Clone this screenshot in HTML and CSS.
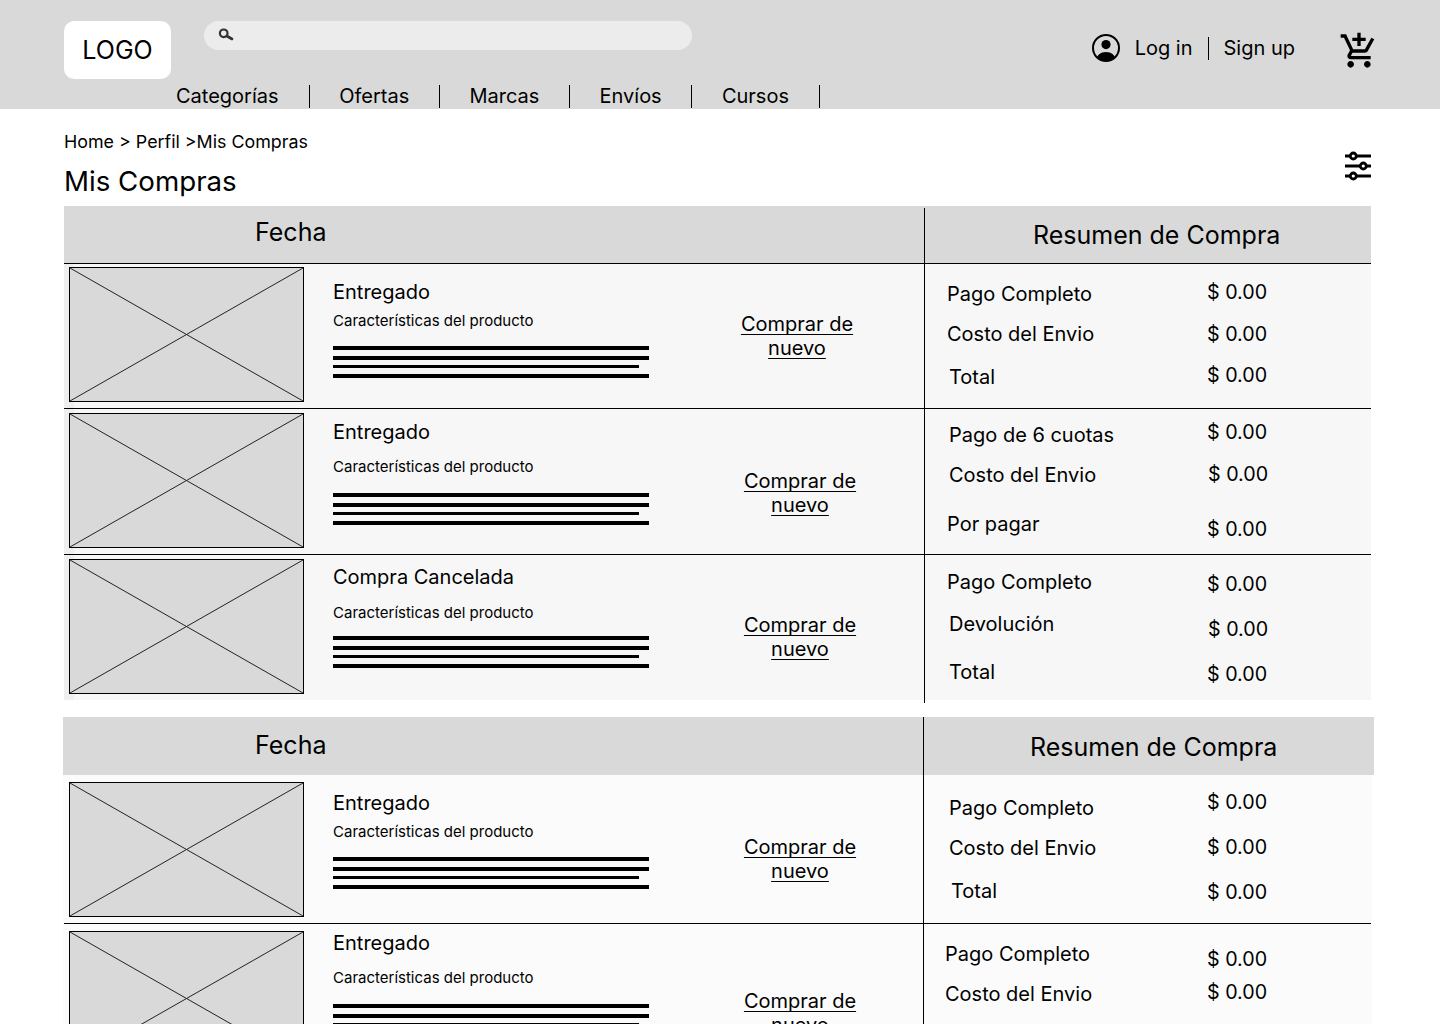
FILE: index.html
```html
<!DOCTYPE html>
<html lang="es">
<head>
<meta charset="utf-8">
<title>Mis Compras</title>
<link rel="stylesheet" href="styles.css">
</head>
<body>
<svg class="defs" width="0" height="0" aria-hidden="true">
  <symbol id="ph" viewBox="0 0 233 133" preserveAspectRatio="none">
    <path d="M0 0L233 133M233 0L0 133" fill="none" stroke="#222" stroke-width="1"/>
  </symbol>
</svg>
<header class="topbar">
  <div class="topbar-row">
    <div class="logo">LOGO</div>
    <div class="search">
      <svg class="search-icon" viewBox="0 0 16 14"><circle cx="5.700" cy="6.300" r="3.800" fill="none" stroke="#333" stroke-width="2.200"/><path d="M8.800 9L14 12" stroke="#333" stroke-width="2.600" stroke-linecap="round"/></svg>
    </div>
    <div class="account">
      <svg class="user-icon" viewBox="0 0 28 28"><defs><clipPath id="uc"><circle cx="14" cy="14" r="13"/></clipPath></defs><circle cx="14" cy="10.600" r="4.600" fill="#000"/><path d="M4 28c0-7 4.500-10 10-10s10 3 10 10z" fill="#000" clip-path="url(#uc)"/><circle cx="14" cy="14" r="13" fill="none" stroke="#000" stroke-width="2"/></svg>
      <a class="login">Log in</a>
      <a class="signup">Sign up</a>
      <svg class="cart-icon" viewBox="0 0 24 24"><path d="M11 9h2V6h3V4h-3V1h-2v3H8v2h3v3zm-4 9c-1.100 0-1.990.9-1.990 2S5.900 22 7 22s2-.9 2-2-.9-2-2-2zm10 0c-1.100 0-1.990.9-1.990 2s.89 2 1.990 2 2-.9 2-2-.9-2-2-2zm-9.830-3.250l.03-.12.9-1.630h7.450c.75 0 1.410-.41 1.750-1.030l3.860-7.010L19.420 4h-.01l-1.100 2-2.760 5H8.530l-.13-.27L6.160 6l-.95-2-.94-2H1v2h2l3.600 7.590-1.350 2.450c-.16.28-.25.61-.25.96 0 1.100.9 2 2 2h12v-2H7.420c-.13 0-.25-.11-.25-.25z" fill="#000"/></svg>
    </div>
  </div>
  <nav class="nav">
    <a>Categorías</a><a>Ofertas</a><a>Marcas</a><a>Envíos</a><a>Cursos</a>
  </nav>
</header>

<main class="page">
  <div class="page-head">
    <div>
      <p class="crumbs">Home &gt; Perfil &gt;Mis Compras</p>
      <h1 class="title">Mis Compras</h1>
    </div>
    <svg class="filter-icon" viewBox="0 0 26 30"><g stroke="#000" stroke-width="2.800" fill="#fff"><path d="M0 5H26M0 15H26M0 25H26"/><circle cx="8.300" cy="5" r="3"/><circle cx="18.300" cy="15" r="3"/><circle cx="8.300" cy="25" r="3"/></g></svg>
  </div>

  <section class="orders orders-a">
    <div class="orders-head head-a">
      <h2 class="head-date">Fecha</h2>
      <h2 class="head-sum head-sum-a">Resumen de Compra</h2>
    </div>

    <div class="order h-145 lined">
      <div class="order-main">
        <div class="thumb mt-3"><svg><use href="#ph"/></svg></div>
        <div class="info">
          <p class="status mt-16">Entregado</p>
          <p class="traits mt-8">Características del producto</p>
          <div class="bars mt-16"><i></i><i></i><i></i><i></i></div>
        </div>
        <a class="again mt-48 x-88">Comprar de nuevo</a>
      </div>
      <div class="summary">
        <div class="labels"><p class="mt-18 x-22">Pago Completo</p><p class="mt-16 x-22">Costo del Envio</p><p class="mt-19 x-24">Total</p></div>
        <div class="values"><p class="mt-16">$ 0.00</p><p class="mt-18">$ 0.00</p><p class="mt-17">$ 0.00</p></div>
      </div>
    </div>

    <div class="order h-146 lined">
      <div class="order-main">
        <div class="thumb mt-4"><svg><use href="#ph"/></svg></div>
        <div class="info">
          <p class="status mt-11">Entregado</p>
          <p class="traits mt-14">Características del producto</p>
          <div class="bars mt-17"><i></i><i></i><i></i><i></i></div>
        </div>
        <a class="again mt-60 x-91">Comprar de nuevo</a>
      </div>
      <div class="summary">
        <div class="labels"><p class="mt-14 x-24">Pago de 6 cuotas</p><p class="mt-16 x-24">Costo del Envio</p><p class="mt-25 x-22">Por pagar</p></div>
        <div class="values"><p class="mt-11">$ 0.00</p><p class="mt-18 x-1">$ 0.00</p><p class="mt-31">$ 0.00</p></div>
      </div>
    </div>

    <div class="order h-145">
      <div class="order-main">
        <div class="thumb mt-4"><svg><use href="#ph"/></svg></div>
        <div class="info">
          <p class="status mt-10">Compra Cancelada</p>
          <p class="traits mt-15">Características del producto</p>
          <div class="bars mt-14"><i></i><i></i><i></i><i></i></div>
        </div>
        <a class="again mt-58 x-91">Comprar de nuevo</a>
      </div>
      <div class="summary">
        <div class="labels"><p class="mt-15 x-22">Pago Completo</p><p class="mt-18 x-24">Devolución</p><p class="mt-24 x-24">Total</p></div>
        <div class="values"><p class="mt-17">$ 0.00</p><p class="mt-21 x-1">$ 0.00</p><p class="mt-21">$ 0.00</p></div>
      </div>
    </div>
  </section>

  <section class="orders orders-b">
    <div class="orders-head head-b">
      <h2 class="head-date">Fecha</h2>
      <h2 class="head-sum head-sum-b">Resumen de Compra</h2>
    </div>

    <div class="order h-149 lined">
      <div class="order-main">
        <div class="thumb mt-7 x-6"><svg><use href="#ph"/></svg></div>
        <div class="info">
          <p class="status mt-16">Entregado</p>
          <p class="traits mt-8">Características del producto</p>
          <div class="bars mt-16"><i></i><i></i><i></i><i></i></div>
        </div>
        <a class="again mt-60 x-91">Comprar de nuevo</a>
      </div>
      <div class="summary">
        <div class="labels"><p class="mt-21 x-25">Pago Completo</p><p class="mt-16 x-25">Costo del Envio</p><p class="mt-19 x-27">Total</p></div>
        <div class="values"><p class="mt-15 x-1">$ 0.00</p><p class="mt-21 x-1">$ 0.00</p><p class="mt-21 x-1">$ 0.00</p></div>
      </div>
    </div>

    <div class="order h-150">
      <div class="order-main">
        <div class="thumb mt-7 x-6"><svg><use href="#ph"/></svg></div>
        <div class="info">
          <p class="status mt-7">Entregado</p>
          <p class="traits mt-14">Características del producto</p>
          <div class="bars mt-17"><i></i><i></i><i></i><i></i></div>
        </div>
        <a class="again mt-65 x-91">Comprar de nuevo</a>
      </div>
      <div class="summary">
        <div class="labels"><p class="mt-18 x-21">Pago Completo</p><p class="mt-16 x-21">Costo del Envio</p></div>
        <div class="values"><p class="mt-23 x-1">$ 0.00</p><p class="mt-9 x-1">$ 0.00</p></div>
      </div>
    </div>
  </section>
</main>
</body>
</html>
```
FILE: styles.css
```css
* { box-sizing: border-box; }
html, body { height: 1024px; overflow: hidden; }
body { margin: 0; background: #fff; color: #000; font-family: Inter, "Liberation Sans", sans-serif; font-size: 20px; }
p, h1, h2 { margin: 0; font-weight: 400; }
.defs { position: absolute; }

.topbar { height: 109px; background: #d9d9d9; padding: 21px 61px 0 64px; }
.topbar-row { display: flex; height: 58px; }
.logo { width: 107px; height: 58px; background: #fff; border-radius: 10px; display: flex; align-items: center; justify-content: center; font-size: 25px; }
.search { width: 488px; height: 29px; margin-left: 33px; background: #ececec; border-radius: 15px; padding: 6px 0 0 14px; }
.search-icon { display: block; width: 16px; height: 14px; }
.account { margin-left: auto; display: flex; align-items: flex-start; }
.user-icon { width: 28px; height: 28px; margin-top: 13px; }
.login { line-height: 24px; margin: 15px 0 0 15px; padding-right: 16px; position: relative; }
.login::after { content: ""; position: absolute; right: 0; top: 1px; height: 23px; border-right: 1px solid #000; }
.signup { line-height: 24px; margin: 15px 0 0 15px; }
.cart-icon { width: 40px; height: 40px; margin: 10px 0 0 44px; }

.nav { display: flex; margin: 6px 0 0 112px; height: 23px; }
.nav a { padding: 0 29.600px; border-right: 1px solid #000; line-height: 22px; }
.nav a:first-child { padding-left: 0; padding-right: 30px; }

.page { padding: 0 69px 0 64px; }
.page-head { display: flex; justify-content: space-between; height: 97px; padding-top: 22px; }
.crumbs { font-size: 17.850px; line-height: 22px; }
.title { font-size: 27.700px; line-height: 34px; margin-top: 11px; }
.filter-icon { width: 26px; height: 30px; margin-top: 20px; }

.orders { position: relative; }
.orders::after { content: ""; position: absolute; border-left: 1px solid #000; }
.orders-a { background: linear-gradient(90deg, #efefef 10px, #f7f7f7 10px); }
.orders-a::after { left: 860px; top: 2px; bottom: -3px; }
.orders-b { margin: 17px -3px 0 -1px; background: linear-gradient(90deg, #fbfbfb 1309px, #fff 1309px); }
.orders-b::after { left: 860px; top: 0; bottom: 0; }
.orders-head { display: flex; background: #d9d9d9; }
.orders-head h2 { font-size: 25px; line-height: 30px; }
.head-a { height: 58px; border-bottom: 1px solid #000; }
.head-b { height: 58px; }
.head-date { width: 861px; padding: 11px 0 0 191px; }
.head-b .head-date { padding: 13px 0 0 192px; }
.head-sum-a { padding: 14px 0 0 108px; }
.head-sum-b { padding: 15px 0 0 106px; }

.order { display: flex; position: relative; }
.lined::after { content: ""; position: absolute; left: 0; right: 0; bottom: 0; border-bottom: 1px solid #000; }
.orders-b .lined::after { left: 1px; right: 3px; }
.h-145 { height: 145px; }
.h-146 { height: 146px; }
.h-149 { height: 149px; }
.h-150 { height: 150px; }

.order-main { width: 861px; display: flex; align-items: flex-start; padding-left: 5px; }
.thumb { width: 235px; height: 135px; flex: none; background: #d9d9d9; border: 1px solid #000; }
.thumb svg { display: block; width: 233px; height: 133px; }
.thumb.x-6 { margin-left: 1px; }
.info { width: 316px; margin-left: 29px; flex: none; }
.status { line-height: 24px; }
.traits { font-size: 15px; line-height: 18px; }
.bars { display: flex; flex-direction: column; gap: 6px; }
.bars i { display: block; height: 4px; background: #000; }
.bars i:nth-child(3) { height: 3px; width: 306px; margin-top: -1px; }
.again { width: 120px; flex: none; text-align: center; text-decoration: underline; text-decoration-skip-ink: none; text-underline-offset: 3px; text-decoration-thickness: 1px; line-height: 24px; }

.summary { flex: 1; display: flex; }
.labels { width: 282px; }
.labels p, .values p { line-height: 24px; }
.values p { font-size: 19.700px; }

.x-1 { margin-left: 1px; }
.x-21 { margin-left: 21px; }
.x-22 { margin-left: 22px; }
.x-24 { margin-left: 24px; }
.x-25 { margin-left: 25px; }
.x-27 { margin-left: 27px; }
.x-88 { margin-left: 88px; }
.x-91 { margin-left: 91px; }

.mt-3 { margin-top: 3px; }
.mt-4 { margin-top: 4px; }
.mt-7 { margin-top: 7px; }
.mt-8 { margin-top: 8px; }
.mt-9 { margin-top: 9px; }
.mt-10 { margin-top: 10px; }
.mt-11 { margin-top: 11px; }
.mt-14 { margin-top: 14px; }
.mt-15 { margin-top: 15px; }
.mt-16 { margin-top: 16px; }
.mt-17 { margin-top: 17px; }
.mt-18 { margin-top: 18px; }
.mt-19 { margin-top: 19px; }
.mt-21 { margin-top: 21px; }
.mt-23 { margin-top: 23px; }
.mt-24 { margin-top: 24px; }
.mt-25 { margin-top: 25px; }
.mt-31 { margin-top: 31px; }
.mt-48 { margin-top: 48px; }
.mt-58 { margin-top: 58px; }
.mt-60 { margin-top: 60px; }
.mt-65 { margin-top: 65px; }
```
